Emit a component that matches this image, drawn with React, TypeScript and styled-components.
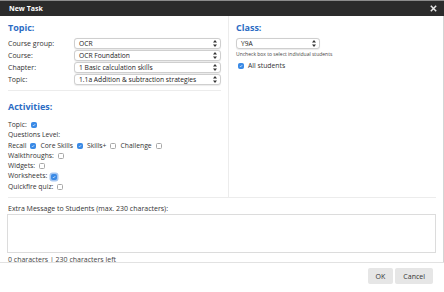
import styled, { createGlobalStyle } from "styled-components";

const GlobalStyle = createGlobalStyle`
  html, body {
    margin: 0;
    padding: 0;
    background: #ffffff;
  }
  body {
    font-family: "Open Sans", "Liberation Sans", sans-serif;
    color: #333333;
  }
`;

interface CheckProps {
  checked?: boolean;
  focused?: boolean;
}

function Check({ checked, focused }: CheckProps) {
  return (
    <Box $checked={checked} $focused={focused}>
      {checked && (
        <svg width="6" height="6" viewBox="0 0 6 6">
          <path d="M1.3 3.1 L2.5 4.3 L4.8 1.7" stroke="#fff" strokeWidth="1" fill="none" />
        </svg>
      )}
    </Box>
  );
}

function Select({ value, width }: { value: string; width: number }) {
  return (
    <SelectBox style={{ width }}>
      <span>{value}</span>
      <svg width="4" height="7" viewBox="0 0 4 7">
        <path d="M2 0 L4 2.6 L0 2.6 Z M0 4.4 L4 4.4 L2 7 Z" fill="#333" />
      </svg>
    </SelectBox>
  );
}

const topicRows = [
  { label: "Course group:", value: "OCR" },
  { label: "Course:", value: "OCR Foundation" },
  { label: "Chapter:", value: "1 Basic calculation skills" },
  { label: "Topic:", value: "1.1a Addition & subtraction strategies" },
];

export default function App() {
  return (
    <>
      <GlobalStyle />
      <Modal>
        <TitleBar>
          <Title>New Task</Title>
          <svg width="7" height="7" viewBox="0 0 7 7">
            <path d="M0.8 0.8 L6.2 6.2 M6.2 0.8 L0.8 6.2" stroke="#e8e8e8" strokeWidth="1.5" />
          </svg>
        </TitleBar>
        <Body>
          <Columns>
            <LeftCol>
              <Heading>Topic:</Heading>
              <TopicList>
                {topicRows.map((r) => (
                  <FieldRow key={r.label}>
                    <Label>{r.label}</Label>
                    <Select value={r.value} width={147} />
                  </FieldRow>
                ))}
              </TopicList>
              <Heading $gap>Activities:</Heading>
              <ActivityList>
                <Line>
                  <span>Topic:</span>
                  <Check checked />
                </Line>
                <Line>Questions Level:</Line>
                <Line>
                  <span>Recall</span>
                  <Check checked />
                  <span>Core Skills</span>
                  <Check checked />
                  <span>Skills+</span>
                  <Check />
                  <span>Challenge</span>
                  <Check />
                </Line>
                <Line>
                  <span>Walkthroughs:</span>
                  <Check />
                </Line>
                <Line>
                  <span>Widgets:</span>
                  <Check />
                </Line>
                <Line>
                  <span>Worksheets:</span>
                  <Check checked focused />
                </Line>
                <Line>
                  <span>Quickfire quiz:</span>
                  <Check />
                </Line>
              </ActivityList>
            </LeftCol>
            <RightCol>
              <Heading>Class:</Heading>
              <ClassSelect>
                <Select value="Y9A" width={84} />
              </ClassSelect>
              <Hint>Uncheck box to select individual students</Hint>
              <Line>
                <Check checked />
                <span>All students</span>
              </Line>
            </RightCol>
          </Columns>
          <MessageLabel>Extra Message to Students (max. 230 characters):</MessageLabel>
          <MessageBox />
          <Counter>0 characters | 230 characters left</Counter>
        </Body>
        <Footer>
          <Button>OK</Button>
          <Button>Cancel</Button>
        </Footer>
      </Modal>
    </>
  );
}

const Modal = styled.div`
  width: 444px;
  height: 292px;
  display: flex;
  flex-direction: column;
  background: #fff;
`;

const TitleBar = styled.div`
  height: 15px;
  border-top: 1px solid #8c8c8c;
  background: #2b2b2b;
  display: flex;
  align-items: center;
  justify-content: space-between;
  padding: 0 7px 0 9px;
  flex-shrink: 0;
`;

const Title = styled.div`
  color: #fff;
  font-weight: 700;
  font-size: 7px;
`;

const Body = styled.div`
  height: 246px;
  overflow: hidden;
  border-right: 1px solid #d4d4d4;
  padding: 0 7px 0 8px;
  flex-shrink: 0;
`;

const Columns = styled.div`
  display: grid;
  grid-template-columns: 221px 1fr;
  height: 181px;
  border-bottom: 1px solid #ececec;
`;

const LeftCol = styled.div`
  padding: 6px 7px 0 0;
  border-right: 1px solid #ececec;
  margin-bottom: -1px;
`;

const RightCol = styled.div`
  padding: 6px 0 0 7px;
`;

const Heading = styled.div<{ $gap?: boolean }>`
  color: #2c6cc4;
  font-weight: 700;
  font-size: 9px;
  line-height: 12px;
  margin-top: ${(p) => (p.$gap ? "10px" : "0")};
`;

const TopicList = styled.div`
  display: flex;
  flex-direction: column;
  gap: 1px;
  margin-top: 4px;
  padding-bottom: 5px;
  border-bottom: 1px solid #ececec;
`;

const FieldRow = styled.div`
  display: flex;
  align-items: center;
  justify-content: space-between;
  height: 11px;
`;

const Label = styled.span`
  font-size: 7px;
  color: #333;
`;

const SelectBox = styled.div`
  box-sizing: border-box;
  height: 11px;
  border: 1px solid #cfcfcf;
  border-radius: 3px;
  background: #fff;
  box-shadow: 0 0.5px 1px rgba(0, 0, 0, 0.08);
  display: flex;
  align-items: center;
  justify-content: space-between;
  padding: 0 3px 0 4px;
  font-size: 6.7px;
  color: #222;
`;

const ActivityList = styled.div`
  margin-top: 7px;
`;

const Line = styled.div`
  font-size: 6.8px;
  line-height: 10.3px;
  color: #333;
  display: flex;
  align-items: center;
  white-space: pre;
`;

const Box = styled.span<{ $checked?: boolean; $focused?: boolean }>`
  box-sizing: border-box;
  width: 6px;
  height: 6px;
  border-radius: 1.5px;
  display: inline-flex;
  align-items: center;
  justify-content: center;
  flex-shrink: 0;
  background: ${(p) => (p.$checked ? "#3a8ae6" : "#fff")};
  border: 1px solid ${(p) => (p.$checked ? "#3a8ae6" : "#a8a8a8")};
  box-shadow: ${(p) => (p.$focused ? "0 0 0 1.5px rgba(90, 150, 230, 0.55)" : "none")};
  margin: 0 4px 0 4px;

  &:first-child {
    margin-left: 2px;
  }
`;

const ClassSelect = styled.div`
  margin-top: 4px;
`;

const Hint = styled.div`
  font-size: 5px;
  color: #444;
  margin: 1px 0 2px;
  line-height: 9px;
`;

const MessageLabel = styled.div`
  font-size: 7px;
  color: #333;
  margin-top: 6px;
  line-height: 10px;
`;

const MessageBox = styled.div`
  height: 37px;
  border: 1px solid #dcdcdc;
  margin-left: -1px;
`;

const Counter = styled.div`
  font-size: 7px;
  color: #444;
  line-height: 10px;
  margin-top: 2px;
`;

const Footer = styled.div`
  flex: 1;
  border-top: 1px solid #e2e2e2;
  display: flex;
  justify-content: flex-end;
  align-items: flex-start;
  gap: 2px;
  padding: 5px 11px 0 0;
`;

const Button = styled.button`
  height: 16px;
  border: none;
  border-radius: 2px;
  background: #e6e6e6;
  color: #333;
  font-family: "Open Sans", "Liberation Sans", sans-serif;
  font-size: 7px;
  padding: 0 8px;
`;
